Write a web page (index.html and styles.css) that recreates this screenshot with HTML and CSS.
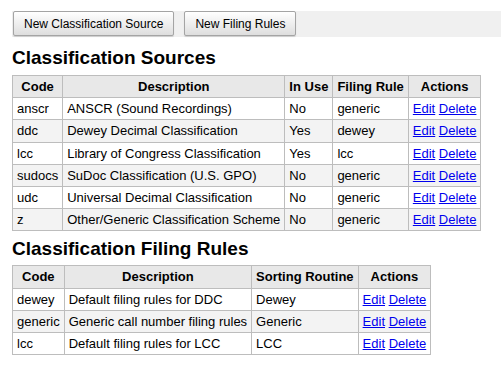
FILE: index.html
```html
<!DOCTYPE html>
<html>
<head>
<meta charset="utf-8">
<link rel="stylesheet" href="styles.css">
</head>
<body>
<div class="toolbar">
  <button class="btn">New Classification Source</button>
  <button class="btn">New Filing Rules</button>
</div>
<h2 class="title first">Classification Sources</h2>
<table class="grid">
  <thead>
    <tr><th>Code</th><th>Description</th><th>In Use</th><th>Filing Rule</th><th>Actions</th></tr>
  </thead>
  <tbody>
    <tr><td>anscr</td><td>ANSCR (Sound Recordings)</td><td>No</td><td>generic</td><td><a href="#">Edit</a> <a href="#">Delete</a></td></tr>
    <tr class="alt"><td>ddc</td><td>Dewey Decimal Classification</td><td>Yes</td><td>dewey</td><td><a href="#">Edit</a> <a href="#">Delete</a></td></tr>
    <tr><td>lcc</td><td>Library of Congress Classification</td><td>Yes</td><td>lcc</td><td><a href="#">Edit</a> <a href="#">Delete</a></td></tr>
    <tr class="alt"><td>sudocs</td><td>SuDoc Classification (U.S. GPO)</td><td>No</td><td>generic</td><td><a href="#">Edit</a> <a href="#">Delete</a></td></tr>
    <tr><td>udc</td><td>Universal Decimal Classification</td><td>No</td><td>generic</td><td><a href="#">Edit</a> <a href="#">Delete</a></td></tr>
    <tr class="alt"><td>z</td><td>Other/Generic Classification Scheme</td><td>No</td><td>generic</td><td><a href="#">Edit</a> <a href="#">Delete</a></td></tr>
  </tbody>
</table>
<h2 class="title second">Classification Filing Rules</h2>
<table class="grid">
  <thead>
    <tr><th>Code</th><th>Description</th><th>Sorting Routine</th><th>Actions</th></tr>
  </thead>
  <tbody>
    <tr><td>dewey</td><td>Default filing rules for DDC</td><td>Dewey</td><td><a href="#">Edit</a> <a href="#">Delete</a></td></tr>
    <tr class="alt"><td>generic</td><td>Generic call number filing rules</td><td>Generic</td><td><a href="#">Edit</a> <a href="#">Delete</a></td></tr>
    <tr><td>lcc</td><td>Default filing rules for LCC</td><td>LCC</td><td><a href="#">Edit</a> <a href="#">Delete</a></td></tr>
  </tbody>
</table>
</body>
</html>
```
FILE: styles.css
```css
html, body {
  margin: 0;
  background: #fff;
}
body {
  padding: 11px 0 0 12px;
  font-family: "Liberation Sans", Arial, sans-serif;
  font-size: 13px;
  color: #000;
}
.toolbar {
  display: flex;
  gap: 9px;
  height: 26px;
  background: #f0f0f0;
  align-items: flex-start;
}
.btn {
  height: 25px;
  margin: 0 0 0 1px;
  padding: 0 10px;
  font-family: "Liberation Sans", Arial, sans-serif;
  font-size: 12px;
  color: #000;
  background: linear-gradient(#ffffff, #dedede);
  border: 1px solid #a4a4a4;
  border-radius: 2px;
  box-shadow: 0 1px 1px rgba(0,0,0,0.15);
}
.title {
  font-size: 19px;
  line-height: 22px;
  font-weight: bold;
  margin: 10px 0 6px;
}
.title.second {
  margin: 7px 0 5px;
}
.grid {
  border-collapse: collapse;
  border: 1px solid #bdbdbd;
}
.grid th, .grid td {
  border: 1px solid #bdbdbd;
  padding: 3px 4px 3px 4px;
  line-height: 15.2px;
  white-space: nowrap;
  text-align: left;
}
.grid th {
  background: #e8e8e8;
  font-weight: bold;
  text-align: center;
}
.grid tr.alt td {
  background: #f3f3f3;
}
.grid a {
  color: #0000ee;
  text-decoration: underline;
}
```
